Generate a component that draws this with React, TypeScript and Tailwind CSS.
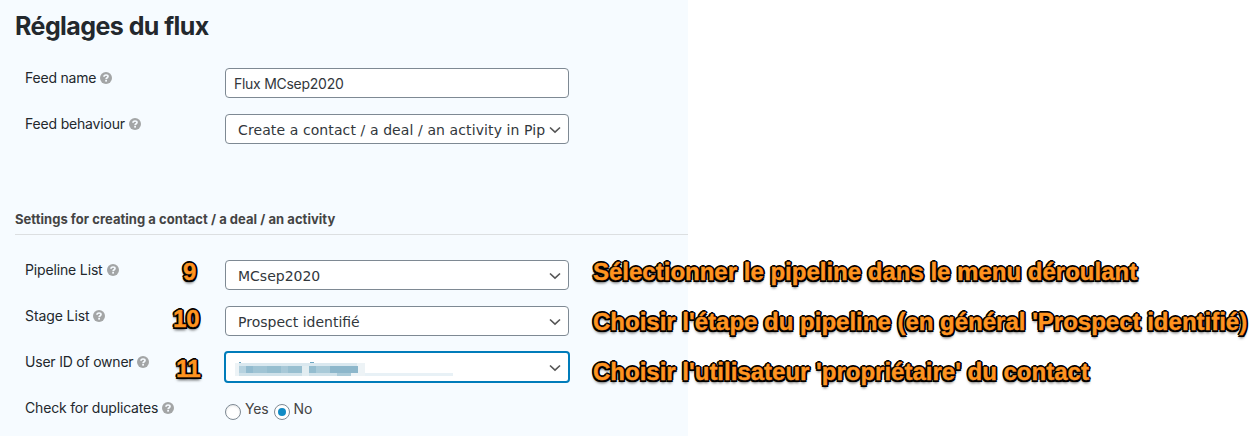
import type { ReactNode } from "react";

function Help() {
  return (
    <svg viewBox="0 0 12 12" className="h-3 w-3 shrink-0">
      <circle cx="6" cy="6" r="6" fill="#a3a5a6" />
      <path d="M4 4.8C4 3.6 4.9 3 6.05 3C7.2 3 8 3.6 8 4.5C8 5.8 6.1 5.6 6.1 7.2" fill="none" stroke="#f6fbff" strokeWidth="1.7" />
      <rect x="5.2" y="8" width="1.8" height="1.6" fill="#f6fbff" />
    </svg>
  );
}

function Row({ label, labelClass, children, mark, markClass, note, noteClass }: {
  label: string;
  labelClass: string;
  children: ReactNode;
  mark?: string;
  markClass?: string;
  note?: string;
  noteClass?: string;
}) {
  const outlined =
    "whitespace-nowrap font-['Liberation_Sans',sans-serif] text-[24px] leading-6 font-bold text-[#ff9420] [-webkit-text-stroke:0.4px_#ff9420] [text-shadow:2px_0_#000,-2px_0_#000,0_2px_#000,0_-2px_#000,1.5px_1.5px_#000,-1.5px_1.5px_#000,1.5px_-1.5px_#000,-1.5px_-1.5px_#000,0_3px_3px_rgba(0,0,0,0.7)]";
  return (
    <div className="flex h-[46px] items-start pl-[25px]">
      <div className="flex h-5 w-[147px] shrink-0 items-center gap-1">
        <span className={`whitespace-nowrap text-[14px] leading-5 ${labelClass}`}>{label}</span>
        <Help />
      </div>
      <div className="w-[53px] shrink-0">
        {mark && <div className={`${outlined} ${markClass}`}>{mark}</div>}
      </div>
      <div className="w-[344px] shrink-0">{children}</div>
      {note && <div className={`ml-6 ${outlined} ${noteClass}`}>{note}</div>}
    </div>
  );
}

function Select({ children, textClass = "" }: { children: ReactNode; textClass?: string }) {
  return (
    <div className="flex h-[30px] items-center justify-between rounded-[4px] border border-[#7e8993] bg-white pr-[6px] pl-3">
      <span className={`whitespace-nowrap pt-[2px] font-['DejaVu_Sans',sans-serif] text-[14px] leading-6 text-[#32373c] ${textClass}`}>
        {children}
      </span>
      <Chevron />
    </div>
  );
}

function Chevron() {
  return (
    <svg viewBox="0 0 14 8" className="mt-px h-2 w-[14px] shrink-0">
      <path d="M2 1.5L7 6.2L12 1.5" fill="none" stroke="#555" strokeWidth="1.6" />
    </svg>
  );
}

function Redacted() {
  return (
    <svg viewBox="0 0 220 16" className="mt-[2px] h-4 w-[220px]" shapeRendering="crispEdges">
      <rect x="0" y="3" width="130" height="13" fill="#edf3f6" />
      <rect x="4" y="3" width="118" height="3" fill="#dae8ef" />
      <rect x="4" y="6" width="7" height="7" fill="#b6d2df" />
      <rect x="11" y="6" width="7" height="7" fill="#92bbcf" />
      <rect x="18" y="6" width="14" height="7" fill="#a0c4d4" />
      <rect x="32" y="6" width="14" height="7" fill="#96becf" />
      <rect x="46" y="6" width="7" height="7" fill="#a7c8d7" />
      <rect x="53" y="6" width="14" height="7" fill="#98bfd0" />
      <rect x="67" y="6" width="7" height="10" fill="#e2edf1" />
      <rect x="74" y="6" width="7" height="7" fill="#94bdcf" />
      <rect x="81" y="6" width="14" height="7" fill="#a9cad8" />
      <rect x="95" y="6" width="28" height="7" fill="#8db7cb" />
      <rect x="4" y="13" width="63" height="3" fill="#cfe1e9" />
      <rect x="74" y="13" width="28" height="3" fill="#cfe1e9" />
      <rect x="102" y="13" width="14" height="3" fill="#abcbd9" />
      <rect x="4" y="2" width="2" height="1" fill="#6ea7c3" />
      <rect x="75" y="2" width="4" height="1" fill="#6ea7c3" />
      <rect x="130" y="13" width="88" height="3" fill="#e8f1f6" />
    </svg>
  );
}

export default function App() {
  return (
    <div className="h-[436px] w-[1258px] overflow-hidden bg-white font-['Inter',sans-serif] text-[#23282d]">
      <div className="h-[436px] w-[688px] bg-[#f6fbff]">
        <div className="h-[68px] pt-[10px] pl-[15px]">
          <h1 className="text-[25px] leading-8 font-bold tracking-[-0.56px]">Réglages du flux</h1>
        </div>
        <Row label="Feed name" labelClass="tracking-[-0.2px]">
          <div className="flex h-[30px] items-center rounded-[4px] border border-[#7e8993] bg-white px-2 pt-px text-[14px] tracking-[-0.27px] text-[#32373c]">
            <span>Flux MCsep2020</span>
          </div>
        </Row>
        <Row label="Feed behaviour" labelClass="tracking-[-0.18px]">
          <Select textClass="tracking-[0.1px]">Create a contact / a deal / an activity in Pip</Select>
        </Row>
        <div className="mb-[25px] ml-[15px] h-[75px] border-b border-[#dcdfe1] pt-[49px]">
          <h2 className="text-[13px] leading-5 font-bold tracking-[0.04px] text-[#444]">Settings for creating a contact / a deal / an activity</h2>
        </div>
        <Row label="Pipeline List" labelClass="tracking-[-0.15px]" mark="9" markClass="ml-[11px]" note="Sélectionner le pipeline dans le menu déroulant" noteClass="">
          <Select>MCsep2020</Select>
        </Row>
        <Row label="Stage List" labelClass="tracking-[-0.1px]" mark="10" markClass="mt-[1px] ml-px" note="Choisir l'étape du pipeline (en général 'Prospect identifié)" noteClass="mt-[4px]">
          <Select>Prospect identifié</Select>
        </Row>
        <Row label="User ID of owner" labelClass="tracking-[-0.21px]" mark="11" markClass="mt-[5px] ml-[4px] tracking-[-0.8px]" note="Choisir l'utilisateur 'propriétaire' du contact" noteClass="mt-[8px] -ml-px">
          <div className="-mx-px -mt-px flex h-8 items-center justify-between rounded-[4px] border-2 border-[#007cba] bg-white pr-[6px] pl-[9px]">
            <Redacted />
            <Chevron />
          </div>
        </Row>
        <Row label="Check for duplicates" labelClass="tracking-[-0.18px]">
          <div className="flex h-6 items-center text-[14px] tracking-[-0.15px] text-[#444]">
            <span className="mt-[3px] h-4 w-4 rounded-full border border-[#7e8993] bg-white shadow-[inset_0_1px_2px_rgba(0,0,0,0.1)]" />
            <span className="mb-[3px] ml-1">Yes</span>
            <span className="mt-[3px] ml-[5px] flex h-4 w-4 items-center justify-center rounded-full border border-[#7e8993] bg-white">
              <span className="h-2 w-2 rounded-full bg-[#118bc5]" />
            </span>
            <span className="mb-[3px] ml-1">No</span>
          </div>
        </Row>
      </div>
    </div>
  );
}
